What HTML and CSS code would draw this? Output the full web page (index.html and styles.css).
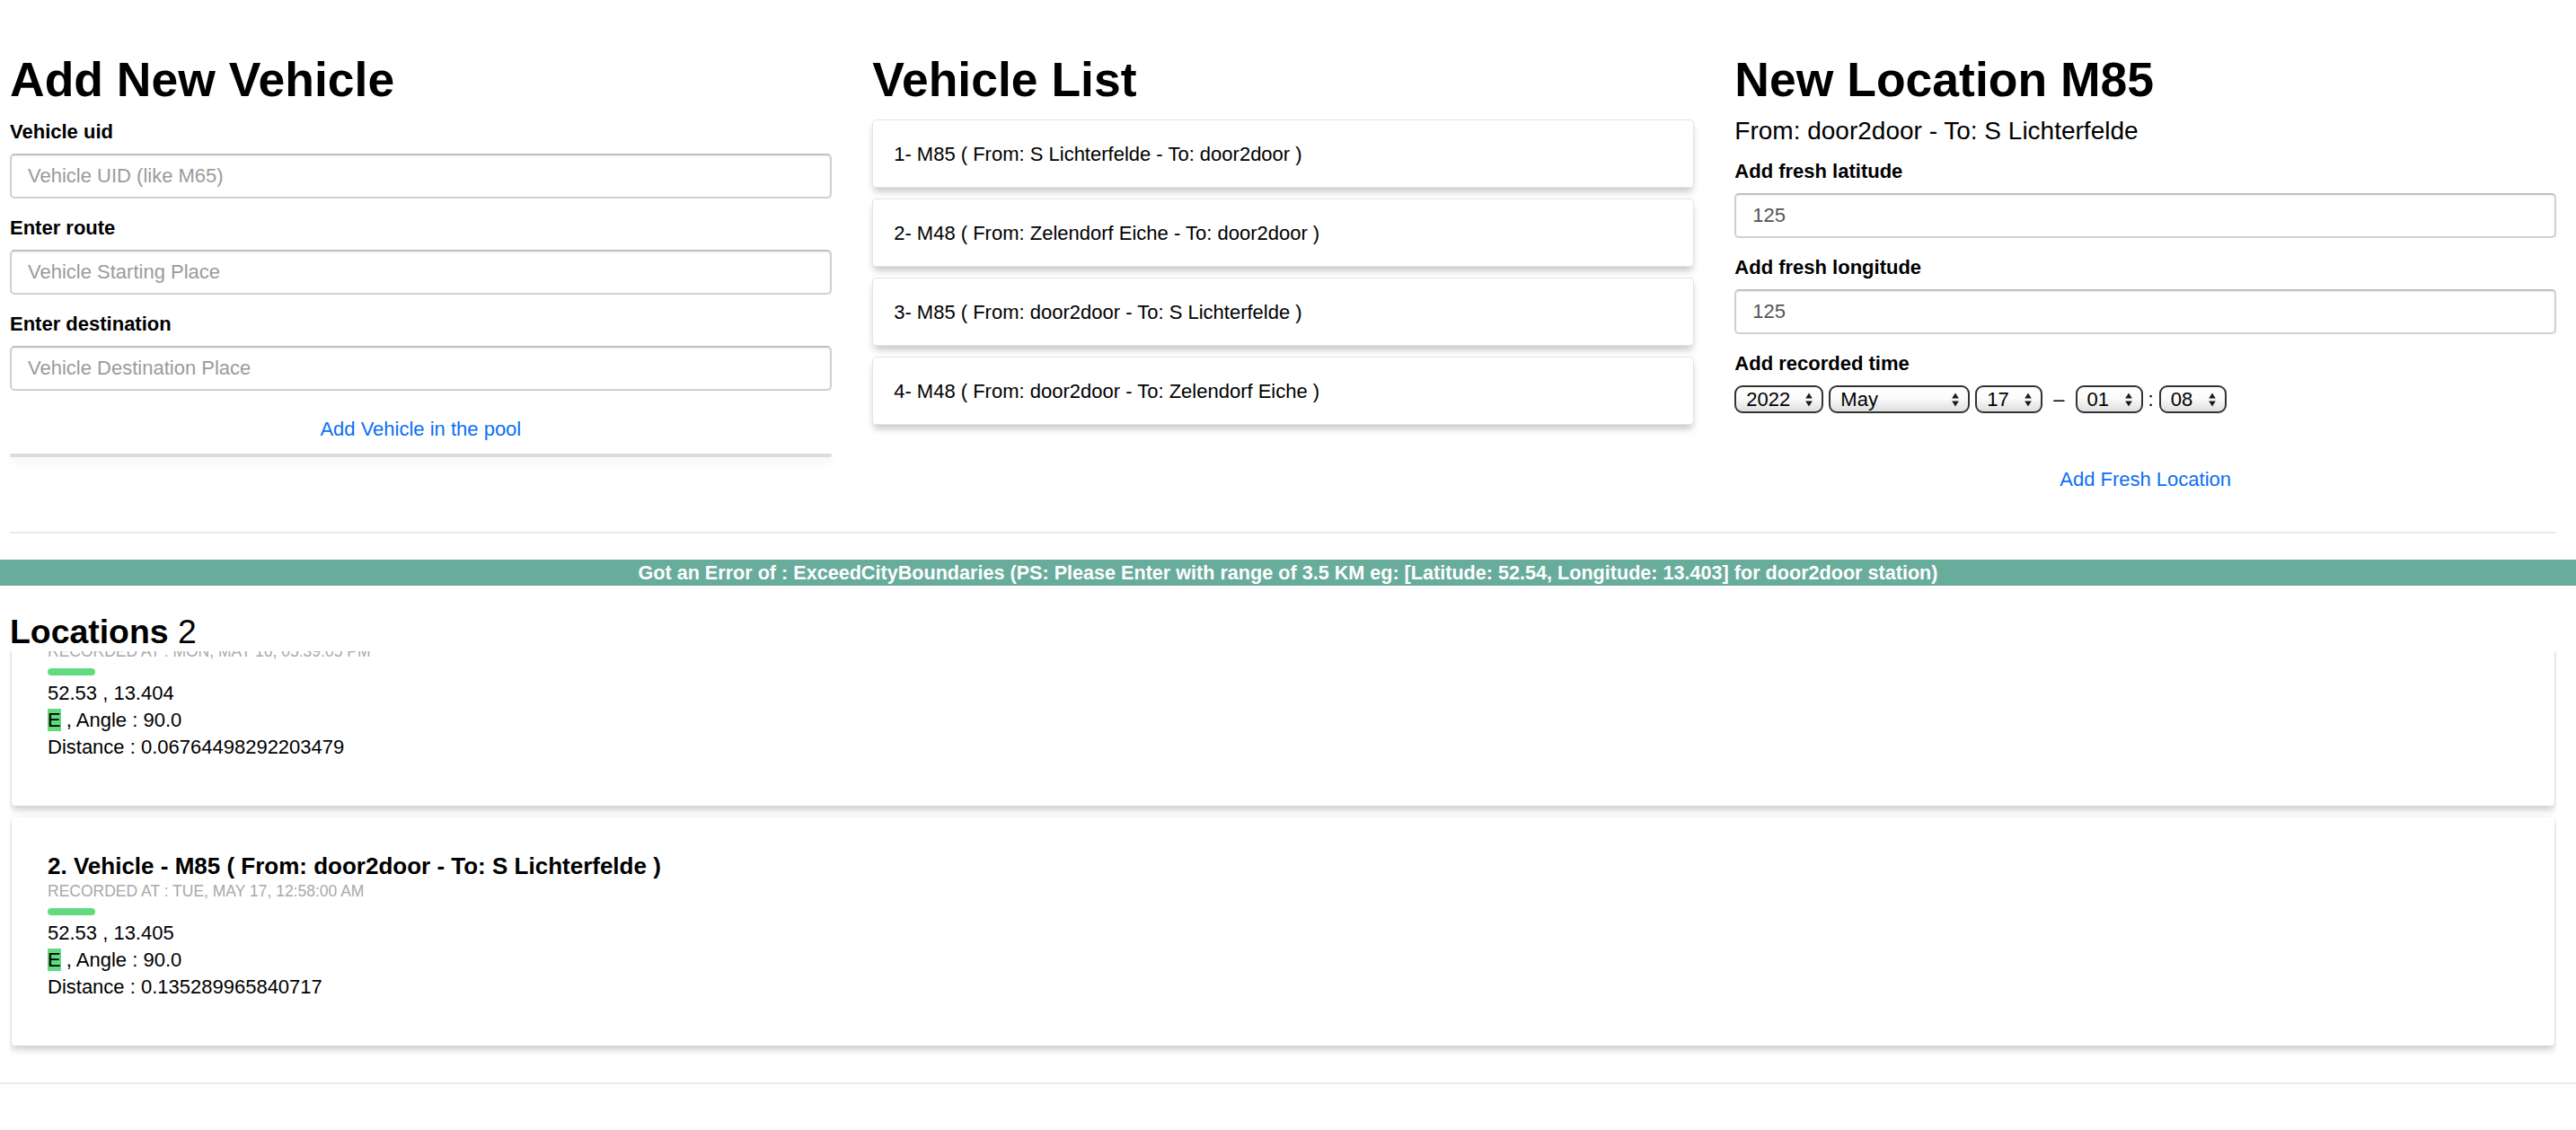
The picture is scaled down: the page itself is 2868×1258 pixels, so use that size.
FILE: index.html
```html
<!DOCTYPE html>
<html lang="en">
<head>
<meta charset="utf-8">
<title>Vehicle Tracker</title>
<link rel="stylesheet" href="styles.css">
</head>
<body>
<div class="top">
  <section class="col">
    <h1 class="col-title">Add New Vehicle</h1>
    <form class="vehicle-form">
      <label class="field-label" for="uid">Vehicle uid</label>
      <input class="field-input" id="uid" type="text" placeholder="Vehicle UID (like M65)">
      <label class="field-label" for="route">Enter route</label>
      <input class="field-input" id="route" type="text" placeholder="Vehicle Starting Place">
      <label class="field-label" for="dest">Enter destination</label>
      <input class="field-input" id="dest" type="text" placeholder="Vehicle Destination Place">
      <div class="form-actions"><a class="action-link" href="#">Add Vehicle in the pool</a></div>
      <div class="form-rule"></div>
    </form>
  </section>

  <section class="col">
    <h1 class="col-title">Vehicle List</h1>
    <ul class="vehicle-list">
      <li class="vehicle-item">1- M85 ( From: S Lichterfelde - To: door2door )</li>
      <li class="vehicle-item">2- M48 ( From: Zelendorf Eiche - To: door2door )</li>
      <li class="vehicle-item">3- M85 ( From: door2door - To: S Lichterfelde )</li>
      <li class="vehicle-item">4- M48 ( From: door2door - To: Zelendorf Eiche )</li>
    </ul>
  </section>

  <section class="col">
    <h1 class="col-title">New Location M85</h1>
    <p class="route">From: door2door - To: S Lichterfelde</p>
    <form class="loc-form">
      <label class="field-label" for="lat">Add fresh latitude</label>
      <input class="field-input" id="lat" type="text" value="125">
      <label class="field-label" for="lng">Add fresh longitude</label>
      <input class="field-input" id="lng" type="text" value="125">
      <label class="field-label">Add recorded time</label>
      <div class="time-row">
        <span class="sel sel-year"><select><option>2022</option></select><svg class="sel-arrow" viewBox="0 0 8 16"><path d="M4 0.6 L7.8 6.6 L0.2 6.6 Z"/><path d="M0.2 9.4 L7.8 9.4 L4 15.4 Z"/></svg></span>
        <span class="sel sel-month"><select><option>May</option></select><svg class="sel-arrow" viewBox="0 0 8 16"><path d="M4 0.6 L7.8 6.6 L0.2 6.6 Z"/><path d="M0.2 9.4 L7.8 9.4 L4 15.4 Z"/></svg></span>
        <span class="sel sel-small"><select><option>17</option></select><svg class="sel-arrow" viewBox="0 0 8 16"><path d="M4 0.6 L7.8 6.6 L0.2 6.6 Z"/><path d="M0.2 9.4 L7.8 9.4 L4 15.4 Z"/></svg></span>
        <span class="time-sep time-dash">–</span>
        <span class="sel sel-small"><select><option>01</option></select><svg class="sel-arrow" viewBox="0 0 8 16"><path d="M4 0.6 L7.8 6.6 L0.2 6.6 Z"/><path d="M0.2 9.4 L7.8 9.4 L4 15.4 Z"/></svg></span>
        <span class="time-sep">:</span>
        <span class="sel sel-small"><select><option>08</option></select><svg class="sel-arrow" viewBox="0 0 8 16"><path d="M4 0.6 L7.8 6.6 L0.2 6.6 Z"/><path d="M0.2 9.4 L7.8 9.4 L4 15.4 Z"/></svg></span>
      </div>
      <div class="form-actions form-actions-loc"><a class="action-link" href="#">Add Fresh Location</a></div>
    </form>
  </section>
</div>

<hr class="rule rule-inset">

<div class="error-bar">Got an Error of : ExceedCityBoundaries (PS: Please Enter with range of 3.5 KM eg: [Latitude: 52.54, Longitude: 13.403] for door2door station)</div>

<h3 class="loc-heading">Locations <span class="loc-count">2</span></h3>

<div class="loc-viewport">
  <div class="loc-list">
    <article class="loc-card">
      <h4 class="loc-title">1. Vehicle - M85 ( From: door2door - To: S Lichterfelde )</h4>
      <div class="loc-time">Recorded at : Mon, May 16, 05:39:05 PM</div>
      <div class="loc-bar"></div>
      <div class="loc-lines">
        <div class="loc-line">52.53 , 13.404</div>
        <div class="loc-line"><span class="dir">E</span> , Angle : 90.0</div>
        <div class="loc-line">Distance : 0.06764498292203479</div>
      </div>
    </article>
    <article class="loc-card">
      <h4 class="loc-title">2. Vehicle - M85 ( From: door2door - To: S Lichterfelde )</h4>
      <div class="loc-time">Recorded at : Tue, May 17, 12:58:00 AM</div>
      <div class="loc-bar"></div>
      <div class="loc-lines">
        <div class="loc-line">52.53 , 13.405</div>
        <div class="loc-line"><span class="dir">E</span> , Angle : 90.0</div>
        <div class="loc-line">Distance : 0.135289965840717</div>
      </div>
    </article>
  </div>
</div>

<hr class="rule">
</body>
</html>
```

FILE: styles.css
```css
* {
  box-sizing: border-box;
}

html,
body {
  margin: 0;
  padding: 0;
  background: #ffffff;
}

body {
  font-family: "Liberation Sans", Arial, Helvetica, sans-serif;
  font-size: 22px;
  line-height: 26px;
  color: #000000;
}

/* ---------- top three columns ---------- */
.top {
  display: grid;
  grid-template-columns: repeat(3, minmax(0, 1fr));
  column-gap: 45.5px;
  align-items: start;
  padding: 58px 22px 44.6px 11px;
}

.col-title {
  margin: 0;
  font-size: 53.5px;
  line-height: 61.5px;
  font-weight: 700;
}

.vehicle-form {
  margin-top: 14.5px;
}

.field-label {
  display: block;
  font-size: 22px;
  line-height: 26px;
  font-weight: 700;
}

.field-input {
  display: block;
  width: 100%;
  height: 50px;
  margin: 11px 0 20px;
  padding: 0 18px;
  border: 2px solid #d0d0d0;
  border-top-color: #c0c0c0;
  border-radius: 5px;
  background: #ffffff;
  box-shadow: inset 0 1px 2px rgba(0, 0, 0, 0.07);
  font-family: "Liberation Sans", Arial, Helvetica, sans-serif;
  font-size: 22px;
  color: #555555;
  outline: none;
}

.field-input::placeholder {
  color: #9b9b9b;
}

.form-actions {
  padding-top: 9.5px;
  text-align: center;
}

.action-link {
  display: inline-block;
  font-size: 22px;
  line-height: 26px;
  color: #0b6ff2;
  text-decoration: none;
}

.form-rule {
  margin-top: 14.5px;
  height: 4px;
  border-radius: 2px;
  background: #dcdcdc;
  box-shadow: 0 4px 12px rgba(0, 0, 0, 0.09);
}

/* vehicle list */
.vehicle-list {
  margin: 13px 0 0;
  padding: 0;
  list-style: none;
}

.vehicle-item {
  height: 76px;
  margin-bottom: 12.3px;
  padding: 25px 23px 23px;
  border: 1px solid #e4e4e4;
  border-radius: 4px;
  background: #ffffff;
  box-shadow: 0 6px 9px -2px rgba(0, 0, 0, 0.24);
  font-size: 22px;
  line-height: 26px;
}

/* new location */
.route {
  margin: 10.8px 0 0;
  font-size: 28px;
  line-height: 32px;
}

.loc-form {
  margin-top: 16px;
}

.time-row {
  display: flex;
  align-items: center;
  gap: 6px;
  height: 31px;
  margin-top: 11px;
}

.sel {
  position: relative;
  display: block;
  height: 31px;
}

.sel select {
  -webkit-appearance: none;
  appearance: none;
  display: block;
  width: 100%;
  height: 31px;
  margin: 0;
  padding: 0 0 0 11px;
  border: 2px solid #333333;
  border-radius: 9px;
  background: linear-gradient(#ffffff 0%, #fbfbfb 45%, #dedede 100%);
  font-family: "Liberation Sans", Arial, Helvetica, sans-serif;
  font-size: 22px;
  color: #000000;
  outline: none;
}

.sel-year {
  width: 99px;
}

.sel-month {
  width: 157px;
}

.sel-small {
  width: 75px;
}

.sel-arrow {
  position: absolute;
  right: 12px;
  top: 50%;
  width: 8px;
  height: 16px;
  margin-top: -8px;
  fill: #1a1a1a;
  pointer-events: none;
}

.time-sep {
  font-size: 22px;
  line-height: 26px;
}

.time-dash {
  margin: 0 6px;
}

.form-actions-loc {
  margin-top: 61px;
  padding-top: 0;
}

/* ---------- rules & error ---------- */
.rule {
  display: block;
  height: 2px;
  margin: 0;
  border: 0;
  background: #ebebeb;
}

.rule-inset {
  margin: 0 22px 0 11px;
}

.error-bar {
  margin-top: 29px;
  height: 29px;
  background: #68ac9b;
  color: #ffffff;
  font-size: 21.6px;
  line-height: 29px;
  font-weight: 700;
  text-align: center;
  white-space: nowrap;
}

/* ---------- locations ---------- */
.loc-heading {
  margin: 30.5px 0 0 11px;
  font-size: 37.4px;
  line-height: 43px;
  font-weight: 700;
}

.loc-count {
  font-weight: 400;
}

.loc-viewport {
  height: 450.5px;
  margin: 0 22px 29px 11px;
  overflow: hidden;
}

.loc-list {
  margin-top: -82.5px;
}

.loc-card {
  height: 254px;
  margin: 0 2px 13px;
  padding: 39px 40px 0;
  border-radius: 4px;
  background: #ffffff;
  box-shadow: 0 4px 8px rgba(0, 0, 0, 0.22);
}

.loc-title {
  margin: 0;
  font-size: 26px;
  line-height: 30px;
  font-weight: 700;
}

.loc-time {
  margin-top: 3px;
  font-size: 17.5px;
  line-height: 20px;
  color: #a9a9a9;
  text-transform: uppercase;
}

.loc-bar {
  width: 53px;
  height: 8px;
  margin-top: 9px;
  border-radius: 4px;
  background: #62db80;
}

.loc-lines {
  margin-top: 5.4px;
}

.loc-line {
  font-size: 22px;
  line-height: 30px;
}

.dir {
  background: #62db80;
}
```
